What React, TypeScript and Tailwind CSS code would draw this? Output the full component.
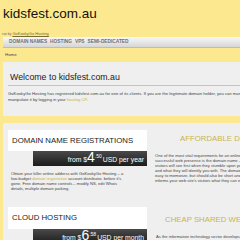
import React from 'react';

const navItems = ['DOMAIN NAMES', 'HOSTING', 'VPS', 'SEMI-DEDICATED'];

const PriceBar = ({ whole, cents, unit }: { whole: string; cents: string; unit: string }) => (
  <div className="ml-[25px] w-[114px] h-[15px] bg-linear-to-b from-[#4a4a4a] to-[#1c1c1c] flex items-start justify-end pr-[3px] text-white whitespace-nowrap overflow-hidden">
    <span className="text-[6.8px] leading-none mt-[5.5px]">from $</span>
    <span className="text-[14px] leading-none -mt-[1px]">{whole}</span>
    <span className="text-[5px] leading-none mt-[2.5px] mr-[1px]">.{cents}</span>
    <span className="text-[6.8px] leading-none mt-[5.5px]">{unit}</span>
  </div>
);

const App = () => {
  return (
    <div className="w-[240px] h-[240px] overflow-hidden bg-[#fce98f] font-['Liberation_Sans',Arial,sans-serif] text-[#222]">
      <div className="pt-[6px] pl-[3px]">
        <h1 className="text-[13.5px] leading-[16px] text-[#111]">kidsfest.com.au</h1>
      </div>
      <div className="mt-[5px] pl-[2px] h-[5px] leading-[5px] whitespace-nowrap">
        <span className="text-[3.4px] text-[#666]">run by </span>
        <span className="text-[4px] text-[#7a6a2e] underline">GoKookyGo Hosting</span>
      </div>

      <div className="mt-[5px] ml-[3px] h-[11px] bg-linear-to-b from-[#f8f8f8] to-[#d6d6d6] border-b border-[#bcbcbc] flex items-center pl-[6px] gap-[3px] whitespace-nowrap">
        {navItems.map((item) => (
          <span key={item} className="text-[4.8px] font-bold text-[#707070]">
            {item}
          </span>
        ))}
      </div>
      <div className="mt-[4px] pl-[5px] text-[4.4px] leading-[5px] text-[#444]">Home</div>

      <div className="mt-[5px] ml-[3px] h-[54px] bg-[#efefef] pl-[5px] overflow-hidden">
        <div className="border-b border-[#c4c4c4] pt-[10px] pb-[3px] pl-[2px]">
          <h2 className="text-[8.8px] leading-[10px] text-[#222] whitespace-nowrap">Welcome to kidsfest.com.au</h2>
        </div>
        <p className="mt-[5px] text-[4.2px] leading-[5.5px] text-[#444] whitespace-nowrap">
          GoKookyGo Hosting has registered kidsfest.com.au for one of its clients. If you are the legitimate domain holder, you can manage it and
          <br />
          manipulate it by logging in your <span className="text-[#c5b13e]">hosting CP</span>.
        </p>
      </div>

      <div className="mt-[7px] ml-[3px] h-[200px] bg-[#efefef] pt-[7px] pl-[5px] flex gap-[8px] overflow-hidden">
        <div className="w-[139px] shrink-0">
          <div className="h-[21px] bg-white flex items-center pl-[4px]">
            <h3 className="text-[7.8px] leading-none text-[#1a1a1a] whitespace-nowrap">DOMAIN NAME REGISTRATIONS</h3>
          </div>
          <PriceBar whole="4" cents="50" unit=" USD per year" />
          <p className="mt-[5px] pl-[3px] text-[4.1px] leading-[5px] text-[#444] whitespace-nowrap">
            Obtain your killer online address with GoKookyGo Hosting – a
            <br />
            low-budget <span className="text-[#c5b13e]">domain registration</span> account distributor, before it's
            <br />
            gone. Free domain name controls – modify NS, edit Whois
            <br />
            details, multiple domain parking.
          </p>

          <div className="mt-[16px] h-[22px] bg-white flex items-center pl-[4px]">
            <h3 className="text-[7.8px] leading-none text-[#1a1a1a] whitespace-nowrap">CLOUD HOSTING</h3>
          </div>
          <PriceBar whole="6" cents="58" unit=" USD per month" />
        </div>

        <div className="shrink-0 w-[150px]">
          <h3 className="mt-[5px] pl-[25px] text-[7.8px] leading-[8px] text-[#c9b44c] whitespace-nowrap">
            AFFORDABLE DOMAIN NAMES
          </h3>
          <p className="mt-[9.5px] text-[4.1px] leading-[5.1px] text-[#444] whitespace-nowrap">
            One of the most vital requirements for an online business's
            <br />
            successful web presence is the domain name – it is what your
            <br />
            visitors will see first when they stumble upon your website
            <br />
            and what they will identify you with. The domain should be
            <br />
            easy to memorize, but should also be short and clear, so that it
            <br />
            informs your web site's visitors what they can expect to find.
          </p>
          <h3 className="mt-[33px] pl-[10px] text-[7.8px] leading-[8px] text-[#c9b44c] whitespace-nowrap">
            CHEAP SHARED WEB HOSTING
          </h3>
          <p className="mt-[10px] pl-[1px] text-[4.1px] leading-[5.1px] text-[#444] whitespace-nowrap">
            As the information technology sector develops, more and more
          </p>
        </div>
      </div>
    </div>
  );
};

export default App;
